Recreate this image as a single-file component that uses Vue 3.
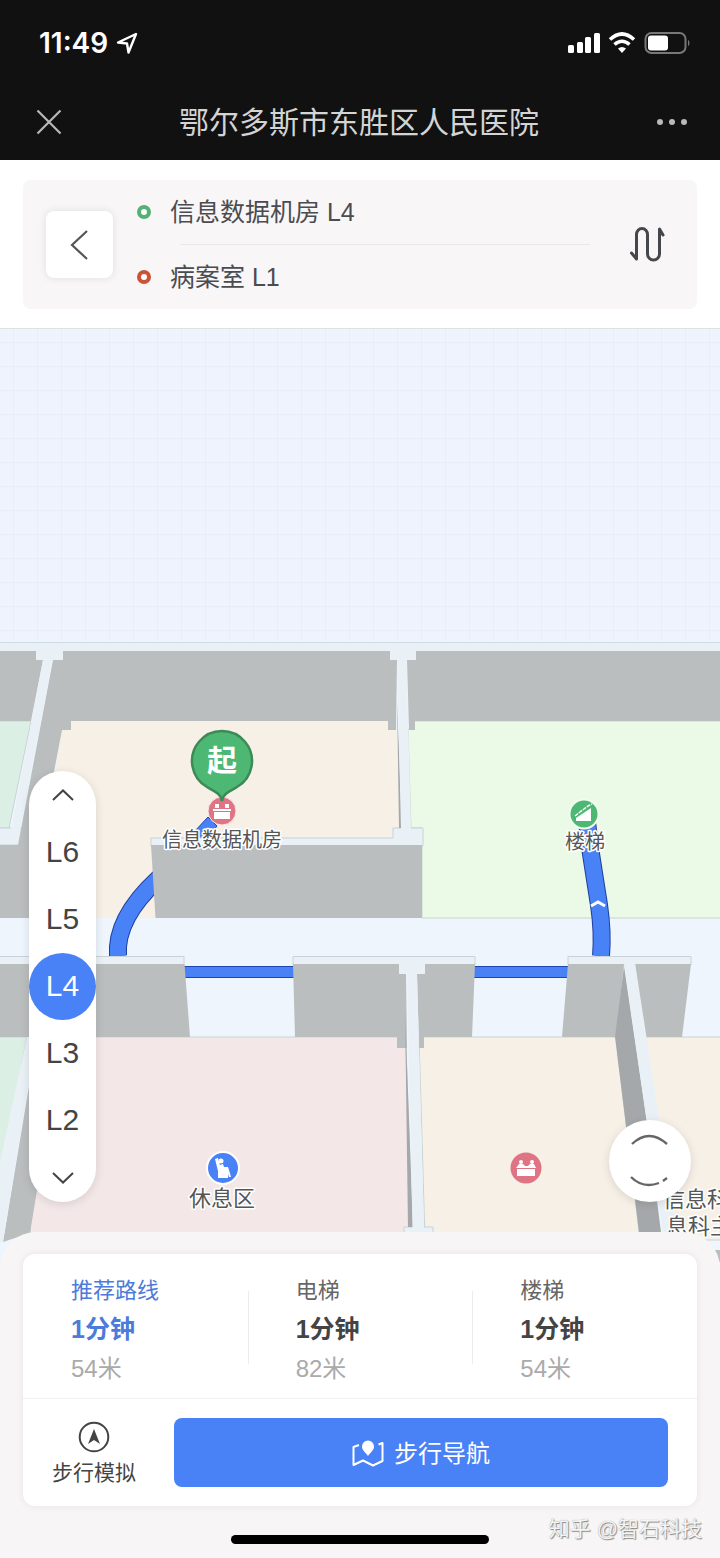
<script setup>
import { ref } from "vue";

const floors = ["L6", "L5", "L4", "L3", "L2"];
const activeFloor = ref("L4");

const start = ref("信息数据机房 L4");
const end = ref("病案室 L1");

const routes = [
  { id: 1, name: "推荐路线", time: "1分钟", distance: "54米" },
  { id: 2, name: "电梯", time: "1分钟", distance: "82米" },
  { id: 3, name: "楼梯", time: "1分钟", distance: "54米" },
];
const activeRoute = ref(1);

// swap start and destination
const swapRoute = () => {
  const old = start.value;
  start.value = end.value;
  end.value = old;
};

const moveFloor = (step) => {
  const next = floors.indexOf(activeFloor.value) + step;
  if (floors[next]) activeFloor.value = floors[next];
};
</script>

<template>
  <div class="page">
    <header class="top">
      <div class="status">
        <span class="clock">11:49</span>
        <svg class="arrow" width="22" height="22" viewBox="0 0 22 22">
          <path d="M20 2 L2 10.500 L11 11.500 L12.500 20.500 Z" fill="none" stroke="#fff" stroke-width="2.400" stroke-linejoin="round" />
        </svg>
        <svg class="signals" width="124" height="24" viewBox="0 0 124 24">
          <g fill="#fff">
            <rect x="1" y="14" width="6" height="8" rx="1.500" />
            <rect x="10" y="11" width="6" height="11" rx="1.500" />
            <rect x="18" y="6" width="6" height="16" rx="1.500" />
            <rect x="27" y="2" width="6" height="20" rx="1.500" />
            <path d="M55 22 L51 17.500 Q55 14.500 59 17.500 Z" />
          </g>
          <path d="M43 8.500 Q55 -2.500 67 8.500 M47.500 13.500 Q55 7 62.500 13.500" fill="none" stroke="#fff" stroke-width="3.600" />
          <rect x="78.500" y="2" width="40" height="20" rx="6" fill="none" stroke="#77787a" stroke-width="2" />
          <rect x="81" y="4.500" width="20" height="15" rx="3" fill="#fff" />
          <path d="M121 8.500 Q124 12 121 15.500 Z" fill="#77787a" />
        </svg>
      </div>
      <div class="nav">
        <button class="nav-btn" aria-label="关闭">
          <svg width="26" height="26" viewBox="0 0 26 26">
            <path d="M1.500 1.500 L24.500 24.500 M24.500 1.500 L1.500 24.500" stroke="#b9b9b9" stroke-width="2.200" />
          </svg>
        </button>
        <h1>鄂尔多斯市东胜区人民医院</h1>
        <button class="nav-btn" aria-label="更多">
          <svg width="32" height="8" viewBox="0 0 32 8" fill="#b9b9b9">
            <circle cx="4" cy="4" r="3" />
            <circle cx="16" cy="4" r="3" />
            <circle cx="28" cy="4" r="3" />
          </svg>
        </button>
      </div>
    </header>

    <section class="search">
      <div class="search-box">
        <button class="back" aria-label="返回">
          <svg width="20" height="32" viewBox="0 0 20 32">
            <path d="M17 2 L2 16 L17 30" fill="none" stroke="#555" stroke-width="2.200" />
          </svg>
        </button>
        <div class="points">
          <p><i class="dot"></i><span>{{ start }}</span></p>
          <hr />
          <p><i class="dot dot-end"></i><span>{{ end }}</span></p>
        </div>
        <button class="swap" aria-label="交换起终点" @click="swapRoute()">
          <svg width="36" height="36" viewBox="0 0 36 36">
            <path d="M2.500 26 L7.500 32 V7.500 A5.500 6 0 0 1 18.500 7.500 V27 A6 6 0 0 0 30.500 27 V2 L34 8" fill="none" stroke="#45474b" stroke-width="3" stroke-linejoin="round" stroke-linecap="round" />
          </svg>
        </button>
      </div>
    </section>

    <section class="map">
      <svg class="map-svg" viewBox="0 329 720 933">
        <defs>
          <pattern id="grid" x="13" y="6" width="24" height="24" patternUnits="userSpaceOnUse">
            <path d="M0.500 0 V24 M0 0.500 H24" stroke="#e9edf8" stroke-width="1" />
          </pattern>
        </defs>
        <rect y="329" width="720" height="933" fill="#eff3fe" />
        <rect y="329" width="720" height="314" fill="url(#grid)" />

        <!-- floor slab -->
        <rect y="642" width="720" height="620" fill="#eef5fd" />
        <rect y="642" width="720" height="10" fill="#e9f1f7" />
        <path d="M0 642.500 H720" stroke="#cfdbe2" />

        <!-- rooms -->
        <g stroke="#c9d3d3" stroke-width="1">
          <path d="M-1 721 H31 L9 828 H-1 Z" fill="#dcefe5" />
          <path d="M71 721 H396 L401 838 H151 L156 918 H30 L62 730 Z" fill="#f6f0e7" stroke="none" />
          <path d="M415 721 H721 V918 H422 V828 H411 L408 730 Z" fill="#eafae6" />
          <path d="M-1 1037 H27 L-1 1180 Z" fill="#dcefe5" />
          <path d="M36 1037 H398 L406 1048 L412 1240 H30 Z" fill="#f4e7e7" />
          <path d="M419 1037 H616 L640 1240 H425 Z" fill="#f6f0e7" />
          <path d="M645 1037 H721 V1240 H675 Z" fill="#f6f0e7" />
        </g>

        <!-- path from the start room to the stairs -->
        <g fill="none">
          <path d="M170 868 L158 879 C132 903 116 930 118 956" stroke="#1f3f9e" stroke-width="18" />
          <path d="M170 868 L158 879 C132 903 116 930 118 956" stroke="#4981f6" stroke-width="16" />
          <path d="M587 822 L591 854 L599 905 Q603 932 601 956" stroke="#1f3f9e" stroke-width="18" />
          <path d="M587 822 L591 854 L599 905 Q603 932 601 956" stroke="#4981f6" stroke-width="16" />
          <path d="M591 906 L598 902 L605 906" stroke="#fff" stroke-width="3" />
        </g>
        <path d="M208 817 L194 832 V838 H208 L217 826 Z" fill="#4981f6" stroke="#1f45b5" stroke-width="1" />
        <g fill="#4981f6" stroke="#1f45b5" stroke-width="1">
          <rect x="180" y="966.500" width="118" height="11" />
          <rect x="470" y="966.500" width="102" height="11" />
        </g>

        <!-- wall tops -->
        <g fill="#e9f1f6" stroke="#c8d2d7" stroke-width="1">
          <path d="M-1 828 H40 V845 H-1 Z" />
          <path d="M151 838 H393 V828 H423 V846 H151 Z" />
          <path d="M-1 956.500 H184 V965 H-1 Z" />
          <path d="M293 956.500 H475 V965 H293 Z" />
          <path d="M568 956.500 H691 V965 H568 Z" />
          <path d="M404 1227 H433 V1240 H404 Z" />
        </g>

        <!-- wall sides -->
        <g fill="#babebf">
          <path d="M0 651 H36 V660 H43 L31 721 H0 Z" />
          <path d="M63 651 H390 V660 H397 L396 730 H388 V721 H71 V730 H62 L36 866 H14 L53 660 H62 Z" />
          <path d="M416 651 H720 V721 H415 V730 H409 L407 660 H416 Z" />
          <path d="M0 845 H40 V918 H0 Z" />
          <path d="M151 845 H422 V918 H155.500 Z" />
          <path d="M0 964 H184.500 L190 1037 H0 Z" />
          <path d="M293 964 H399 V974 H406 L407 1048 H397 V1037 H295 Z" />
          <path d="M425 964 H475 L472 1037 H424 V1048 H419 L417 974 H425 Z" />
          <path d="M568 964 H624 L616 1037 H562 Z" />
          <path d="M635 964 H691 L682 1037 H645 Z" />
          <path d="M30 1080 L42 1160 L30 1233 L3 1242 Z" />
          <path d="M706 1250 H720 V1262 H706 Z" />
        </g>
        <g fill="#a5a8aa">
          <path d="M397 700 L402 828 H399 Z" />
          <path d="M405 1010 L413 1227 H408 Z" />
          <path d="M624 966 L648 1130 L662 1240 H640 L615 1037 Z" />
        </g>

        <!-- narrow walls between rooms -->
        <g fill="#eaf1f6">
          <path d="M36 650 H63 V660 H52.500 L20 830 H11 L43 660 H36 Z" />
          <path d="M390 650 H416 V660 H406.500 L411 829 H401 L397 660 H390 Z" />
          <path d="M399 963 H425 V974 H417 L424 1228 H412.500 L407 974 H399 Z" />
          <path d="M624 963 H635 L678 1240 H664 Z" />
          <path d="M27 1037 H36 L3 1242 H-6 V1190 Z" />
        </g>

        <!-- start room icon and pin -->
        <circle cx="222" cy="811" r="14" fill="#df7485" stroke="#fbe9e8" stroke-width="1" />
        <path d="M214 812 H230 V819 H214 Z M213 809 H231 V811 H213 Z M215 804 h4 v4 h-4 Z M225 804 h4 v4 h-4 Z" fill="#fff" />
        <path d="M222 801 C221 793 213 791 207 787 A30 30 0 1 1 237 787 C231 791 223 793 222 801 Z" fill="#4db873" stroke="#3d8a56" stroke-width="2.500" />
        <text class="pin-text" x="222" y="771">起</text>
        <text class="label" x="222" y="847">信息数据机房</text>

        <!-- stairs -->
        <circle cx="584" cy="814" r="14.500" fill="#4db873" stroke="#f3fbf0" stroke-width="2" />
        <path d="M576 821 V818 L591 808 V821 Z" fill="#fff" />
        <path d="M575 816 L580 812 L584 809 L588 806 L592 804" fill="none" stroke="#fff" stroke-width="1.500" stroke-dasharray="4 1" />
        <text class="label" x="585" y="849">楼梯</text>

        <!-- rest area -->
        <circle cx="223" cy="1168" r="16" fill="#4981f6" stroke="#fff" stroke-width="2" />
        <circle cx="221" cy="1161" r="2.500" fill="#fff" />
        <path d="M215 1159 L218 1158 L220 1165 L223 1164 L224 1167 H228 L229 1170 L231 1177 L229 1177 L228 1174 V1178 H218 V1171 Z" fill="#fff" />
        <text class="label label-big" x="222" y="1206">休息区</text>

        <!-- office -->
        <circle cx="526" cy="1168" r="15.500" fill="#df7485" />
        <circle cx="521" cy="1162" r="2" fill="#fff" />
        <circle cx="532" cy="1162" r="2" fill="#fff" />
        <path d="M517 1169 H535 V1176 H517 Z M516 1168 L519 1164 H523 L525 1166 H528 L530 1164 H534 L536 1168 Z" fill="#fff" />

        <text class="label label-big label-left" x="663" y="1207">信息科</text>
        <text class="label label-big label-left" x="666" y="1234">息科主</text>
      </svg>

      <div class="floors">
        <button class="floor-step" aria-label="上一层" @click="moveFloor(-1)">
          <svg width="22" height="12" viewBox="0 0 22 12">
            <path d="M1 11 L11 1.500 L21 11" fill="none" stroke="#444" stroke-width="2" />
          </svg>
        </button>
        <button
          v-for="floor in floors"
          :key="floor"
          class="floor"
          :class="{ active: floor === activeFloor }"
          @click="activeFloor = floor"
        >
          {{ floor }}
        </button>
        <button class="floor-step" aria-label="下一层" @click="moveFloor(1)">
          <svg width="22" height="12" viewBox="0 0 22 12">
            <path d="M1 1 L11 10.500 L21 1" fill="none" stroke="#444" stroke-width="2" />
          </svg>
        </button>
      </div>

      <button class="locate" aria-label="定位">
        <svg width="82" height="82" viewBox="0 0 82 82">
          <path d="M23 24 Q40 8 58 24 M22 57 Q34 69 50 63 M54 61 L58 58" fill="none" stroke="#666" stroke-width="2.400" />
        </svg>
      </button>
    </section>

    <section class="sheet">
      <div class="card">
        <div class="routes">
          <button
            v-for="route in routes"
            :key="route.id"
            class="route"
            :class="{ active: route.id === activeRoute }"
            @click="activeRoute = route.id"
          >
            <span class="name">{{ route.name }}</span>
            <b>{{ route.time }}</b>
            <span class="distance">{{ route.distance }}</span>
          </button>
        </div>
        <div class="actions">
          <button class="simulate">
            <svg width="32" height="32" viewBox="0 0 32 32">
              <circle cx="16" cy="16" r="14.300" fill="none" stroke="#444" stroke-width="2" />
              <path d="M16 8 L22 23 L16 19 L10 23 Z" fill="#444" />
            </svg>
            步行模拟
          </button>
          <button class="go">
            <svg width="32" height="28" viewBox="0 0 32 28">
              <path d="M7 6 L1.500 8 V26 L11 21.500 L21 26.500 L30.500 22 V4 L26.500 5.500" fill="none" stroke="#fff" stroke-width="2" stroke-linejoin="round" />
              <path d="M16 17 C13 13 10 11 10 7.500 A6 6 0 0 1 22 7.500 C22 11 19 13 16 17 Z" fill="#fff" />
            </svg>
            <span>步行导航</span>
          </button>
        </div>
      </div>
      <div class="home-bar"></div>
      <span class="mark">知乎 @智石科技</span>
    </section>
  </div>
</template>

<style>
body {
  margin: 0;
  background: #f7f5f6;
}
</style>

<style scoped>
* {
  box-sizing: border-box;
}

.page {
  font-family: "Liberation Sans", "Noto Sans CJK SC", sans-serif;
  color: #444;
  overflow: hidden;
}

button {
  font-family: inherit;
  color: inherit;
  border: none;
  background: none;
  padding: 0;
  cursor: pointer;
}

svg {
  display: block;
}

.top {
  background: #111;
  padding-bottom: 2px;
}

.status {
  display: flex;
  align-items: center;
  height: 86px;
  padding: 0 29px 0 39px;
}

.clock {
  font-family: Inter, sans-serif;
  font-size: 28px;
  font-weight: 600;
  color: #fff;
}

.arrow {
  margin-left: 8px;
}

.signals {
  margin-left: auto;
}

.nav {
  display: flex;
  align-items: center;
  justify-content: space-between;
  height: 72px;
  padding: 0 32px 0 36px;
}

.nav h1 {
  margin: 0;
  padding-bottom: 4px;
  font-size: 30px;
  font-weight: 400;
  color: #d4d4d4;
}

.search {
  background: #fff;
  padding: 20px 23px 19px;
  border-bottom: 1px solid #dde2e4;
}

.search-box {
  display: flex;
  align-items: center;
  gap: 24px;
  padding: 0 32px 0 23px;
  background: #f8f6f7;
  border-radius: 8px;
}

.back {
  display: flex;
  align-items: center;
  justify-content: center;
  width: 67px;
  height: 67px;
  background: #fff;
  border-radius: 8px;
  box-shadow: 0 0 8px rgba(0, 0, 0, 0.1);
}

.points {
  flex: 1;
  margin-right: 15px;
}

.points p {
  display: flex;
  align-items: center;
  gap: 19px;
  height: 64px;
  margin: 0;
  font-size: 25px;
  color: #4b4c50;
}

.points span {
  padding-bottom: 4px;
}

.points hr {
  height: 1px;
  margin: 0 0 0 43px;
  border: none;
  background: #eae8ea;
}

.dot {
  width: 14px;
  height: 14px;
  border: 4px solid #55b074;
  border-radius: 50%;
  background: #fff;
}

.dot-end {
  border-color: #cc5436;
}

.map {
  position: relative;
}

.map-svg {
  width: 100%;
  height: auto;
}

.label {
  font-size: 20px;
  fill: #555;
  text-anchor: middle;
  paint-order: stroke;
  stroke: #fff;
  stroke-width: 3px;
  stroke-linejoin: round;
}

.label-big {
  font-size: 22px;
}

.label-left {
  text-anchor: start;
}

.pin-text {
  font-size: 30px;
  font-weight: 700;
  fill: #fff;
  text-anchor: middle;
}

.floors {
  position: absolute;
  left: 29px;
  bottom: 60px;
  display: flex;
  flex-direction: column;
  width: 67px;
  background: #fff;
  border-radius: 34px;
  box-shadow: 0 2px 10px rgba(0, 0, 0, 0.12);
}

.floor {
  height: 67px;
  padding-bottom: 2px;
  font-size: 30px;
  border-radius: 50%;
}

.floor.active {
  background: #4981f6;
  color: #fff;
}

.floor-step {
  display: flex;
  align-items: center;
  justify-content: center;
  height: 48px;
}

.locate {
  position: absolute;
  right: 29px;
  bottom: 60px;
  width: 82px;
  height: 82px;
  background: #fff;
  border-radius: 50%;
  box-shadow: 0 2px 10px rgba(0, 0, 0, 0.12);
}

.sheet {
  position: relative;
  margin-top: -30px;
  padding: 22px 23px 14px;
  background: #f7f5f6;
  border-radius: 36px 36px 0 0;
}

.card {
  background: #fff;
  border-radius: 12px;
  box-shadow: 0 0 8px rgba(0, 0, 0, 0.07);
}

.routes {
  display: grid;
  grid-template-columns: repeat(3, 1fr);
  padding: 17px 0 10px;
  border-bottom: 1px solid #f0f0f0;
}

.route {
  position: relative;
  display: flex;
  flex-direction: column;
  padding-left: 48px;
  line-height: 39px;
  text-align: left;
  font-size: 22px;
}

.route + .route::before {
  content: "";
  position: absolute;
  left: 0;
  top: 20px;
  bottom: 24px;
  width: 1px;
  background: #ececec;
}

.name {
  color: #666;
}

.route b {
  font-size: 25px;
  font-weight: 700;
}

.distance {
  font-size: 24px;
  color: #aaa;
}

.route.active .name,
.route.active b {
  color: #4c7bd9;
}

.actions {
  display: flex;
  align-items: center;
  gap: 38px;
  padding: 19px 29px;
}

.simulate {
  display: flex;
  flex-direction: column;
  align-items: center;
  gap: 6px;
  padding-top: 3px;
  font-size: 21px;
  line-height: 28px;
  white-space: nowrap;
}

.go {
  flex: 1;
  display: flex;
  align-items: center;
  justify-content: center;
  gap: 10px;
  height: 69px;
  font-size: 24px;
  color: #fff;
  background: #4981f6;
  border-radius: 8px;
}

.go span {
  padding-bottom: 2px;
}

.home-bar {
  width: 258px;
  height: 9px;
  margin: 29px auto 0;
  border-radius: 5px;
  background: #000;
}

.mark {
  position: absolute;
  right: 18px;
  bottom: 16px;
  font-size: 21px;
  color: #f4f4f4;
  text-shadow: 1px 1px 1px #888, 0 0 1px #999;
}
</style>
